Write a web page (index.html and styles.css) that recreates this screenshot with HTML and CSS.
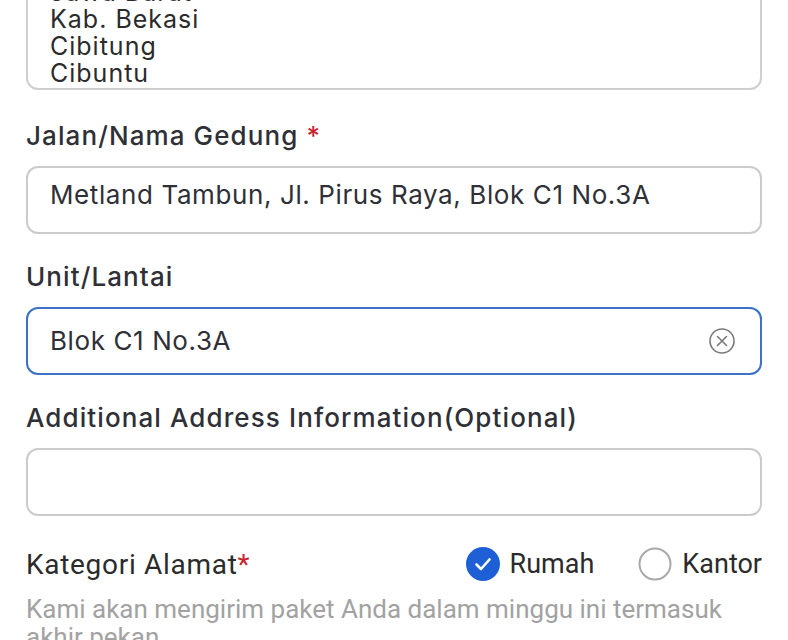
FILE: index.html
```html
<!DOCTYPE html>
<html>
<head>
<meta charset="utf-8">
<link rel="stylesheet" href="styles.css">
</head>
<body>
<div class="form">
  <div class="area">
    <div class="area-line">Jawa Barat</div>
    <div class="area-line">Kab. Bekasi</div>
    <div class="area-line">Cibitung</div>
    <div class="area-line">Cibuntu</div>
  </div>

  <div class="label label-first">Jalan/Nama Gedung <span class="req">*</span></div>
  <div class="field field-top"><span class="value">Metland Tambun, Jl. Pirus Raya, Blok C1 No.3A</span></div>

  <div class="label">Unit/Lantai</div>
  <div class="field field-focus">
    <span class="value">Blok C1 No.3A</span>
    <svg class="clear" width="28" height="28" viewBox="0 0 28 28">
      <circle cx="14" cy="14" r="12" fill="none" stroke="#7a7a7a" stroke-width="1.6"/>
      <path d="M9.5 9.5 L18.5 18.5 M18.5 9.5 L9.5 18.5" stroke="#7a7a7a" stroke-width="1.6" stroke-linecap="round"/>
    </svg>
  </div>

  <div class="label">Additional Address Information(Optional)</div>
  <div class="field"></div>

  <div class="cat-row">
    <div class="cat-label">Kategori Alamat<span class="req">*</span></div>
    <div class="radios">
      <div class="radio">
        <svg width="34" height="34" viewBox="0 0 34 34">
          <circle cx="17" cy="17" r="17" fill="#1f5fd6"/>
          <path d="M10.5 17.5 L15 22 L23.5 12.5" fill="none" stroke="#fff" stroke-width="2.6" stroke-linecap="round" stroke-linejoin="round"/>
        </svg>
        <span>Rumah</span>
      </div>
      <div class="radio">
        <svg width="34" height="34" viewBox="0 0 34 34">
          <circle cx="17" cy="17" r="15.5" fill="#fff" stroke="#a9a9a9" stroke-width="2"/>
        </svg>
        <span>Kantor</span>
      </div>
    </div>
  </div>
  <div class="hint">Kami akan mengirim paket Anda dalam minggu ini termasuk akhir pekan</div>
</div>
</body>
</html>
```

FILE: styles.css
```css
html, body {
  margin: 0;
  padding: 0;
  background: #ffffff;
}
body {
  width: 788px;
  height: 640px;
  overflow: hidden;
}
.form {
  padding: 0 26px;
  display: flex;
  flex-direction: column;
}
.area {
  margin-top: -33px;
  border: 2px solid #cfcfcf;
  border-radius: 12px;
  padding: 10px 22px 1px;
  font-family: Inter, "Liberation Sans", sans-serif;
  font-size: 25px;
  line-height: 27px;
  letter-spacing: 1px;
  color: #2b2b2b;
}
.label {
  margin-top: 27px;
  margin-bottom: 14px;
  font-family: Inter, "Liberation Sans", sans-serif;
  font-weight: 500;
  font-size: 26px;
  line-height: 32px;
  letter-spacing: 1.1px;
  color: #2f3037;
}
.label-first {
  margin-top: 30px;
}
.req {
  color: #c8242f;
}
.field {
  box-sizing: border-box;
  height: 68px;
  border: 2px solid #cbcbcb;
  border-radius: 12px;
  padding: 0 22px;
  display: flex;
  align-items: center;
  font-family: Inter, "Liberation Sans", sans-serif;
  font-size: 26px;
  letter-spacing: 0.6px;
  color: #2f3037;
}
.field-top {
  align-items: flex-start;
  padding-top: 11px;
}
.field-focus {
  border-color: #3c72c4;
  justify-content: space-between;
  padding-right: 24px;
}
.value {
  line-height: 32px;
}
.clear {
  display: block;
}
.cat-row {
  margin-top: 31px;
  display: flex;
  align-items: center;
  justify-content: space-between;
  font-family: Roboto, "Liberation Sans", sans-serif;
  font-size: 28px;
  color: #2b2b2b;
}
.cat-label {
  letter-spacing: 0.7px;
}
.radios {
  display: flex;
  gap: 44px;
  font-size: 27px;
}
.radio {
  display: flex;
  align-items: center;
  gap: 10px;
}
.radio svg {
  display: block;
}
.hint {
  margin-top: 14px;
  font-family: Roboto, "Liberation Sans", sans-serif;
  font-size: 26px;
  line-height: 28px;
  color: #a2a2a2;
}
```
